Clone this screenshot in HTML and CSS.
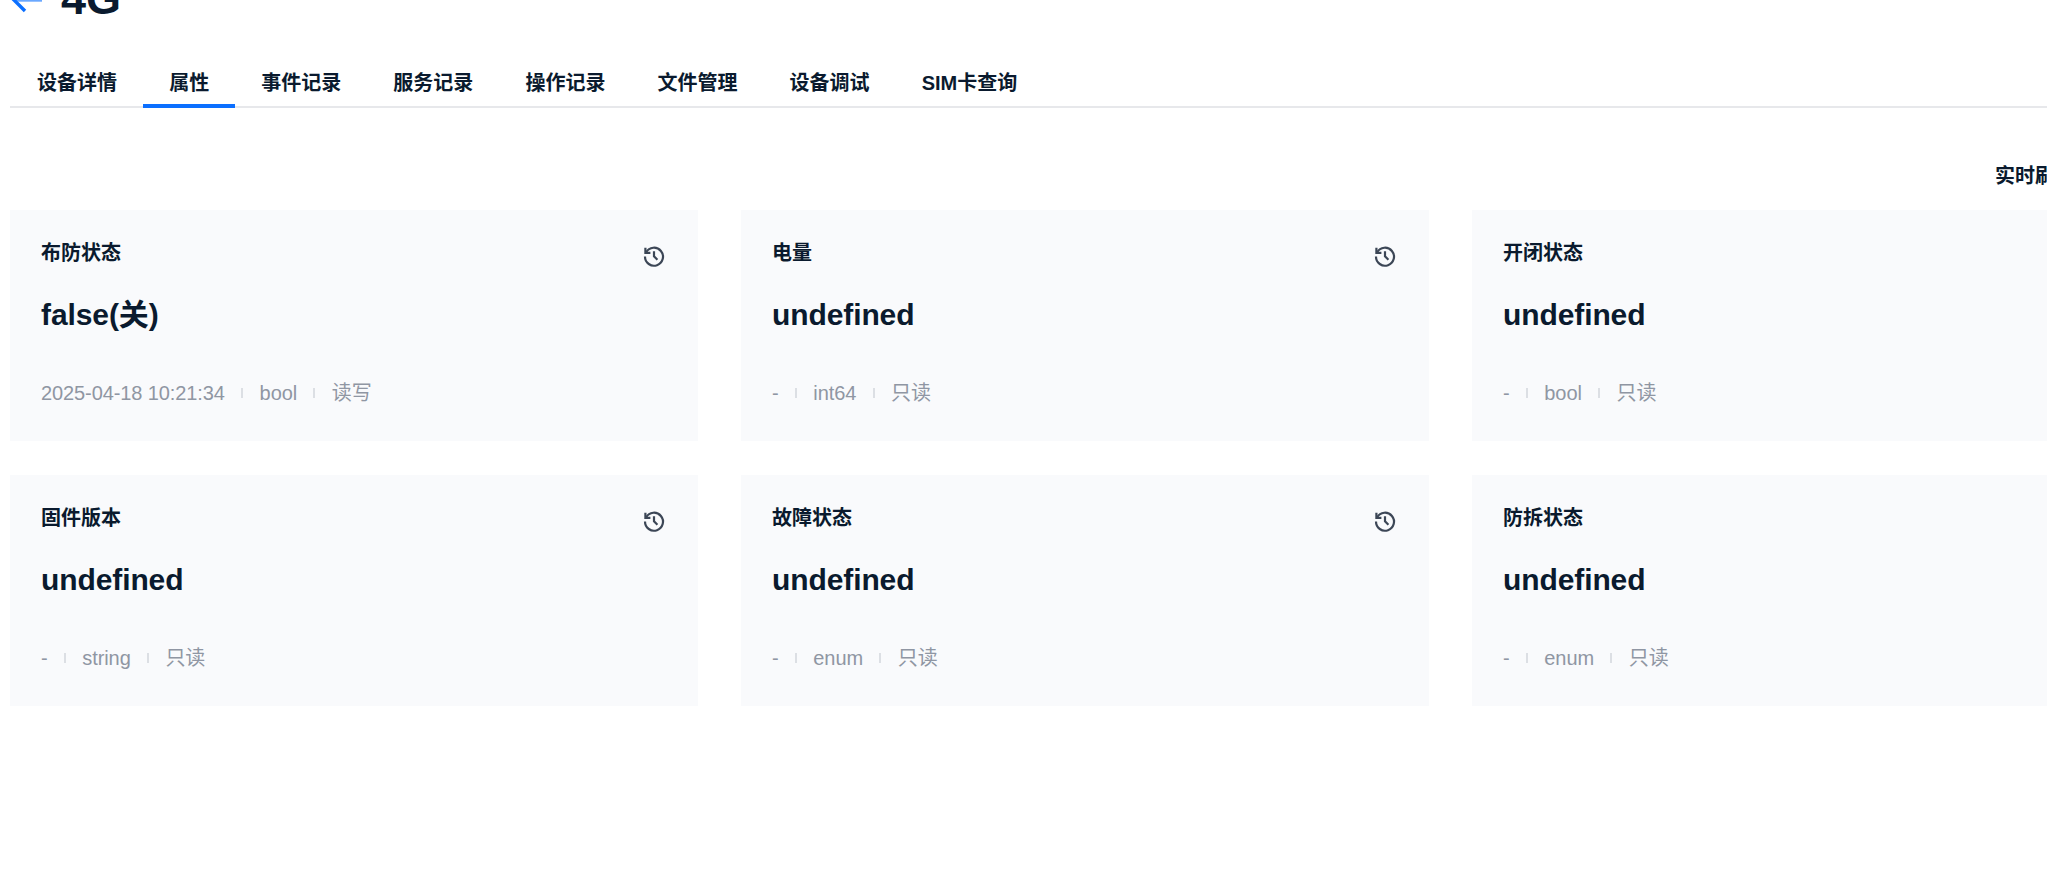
FILE: index.html
```html
<!DOCTYPE html>
<html lang="zh-CN">
<head>
    <meta charset="UTF-8">
    <meta name="viewport" content="width=device-width, initial-scale=1.0">
    <title>设备属性</title>
    <link rel="stylesheet" href="styles.css">
</head>
<body>
    <div class="page">
        <header class="device-head">
            <svg class="back-icon" viewBox="0 0 32 32" fill="none" stroke="#0b6fff" stroke-width="3.4">
                <path d="M32 16H5" stroke="#6aa8ff"></path>
                <path d="M15 5 4 16l11 11"></path>
            </svg>
            <h1>4G</h1>
        </header>

        <nav class="tabs">
            <a class="tab">设备详情</a>
            <a class="tab active">属性</a>
            <a class="tab">事件记录</a>
            <a class="tab">服务记录</a>
            <a class="tab">操作记录</a>
            <a class="tab">文件管理</a>
            <a class="tab">设备调试</a>
            <a class="tab">SIM卡查询</a>
        </nav>

        <div class="toolbar">
            <span class="refresh">实时刷新</span>
        </div>

        <div class="cards">
            <div class="card">
                <div class="card-head">
                    <span class="card-title">布防状态</span>
                    <svg class="history"><use href="#history-icon"></use></svg>
                </div>
                <div class="card-value">false(关)</div>
                <div class="card-meta"><span>2025-04-18 10:21:34</span><i></i><span>bool</span><i></i><span>读写</span></div>
            </div>
            <div class="card">
                <div class="card-head">
                    <span class="card-title">电量</span>
                    <svg class="history"><use href="#history-icon"></use></svg>
                </div>
                <div class="card-value">undefined</div>
                <div class="card-meta"><span>-</span><i></i><span>int64</span><i></i><span>只读</span></div>
            </div>
            <div class="card">
                <div class="card-head">
                    <span class="card-title">开闭状态</span>
                    <svg class="history"><use href="#history-icon"></use></svg>
                </div>
                <div class="card-value">undefined</div>
                <div class="card-meta"><span>-</span><i></i><span>bool</span><i></i><span>只读</span></div>
            </div>
            <div class="card">
                <div class="card-head">
                    <span class="card-title">固件版本</span>
                    <svg class="history"><use href="#history-icon"></use></svg>
                </div>
                <div class="card-value">undefined</div>
                <div class="card-meta"><span>-</span><i></i><span>string</span><i></i><span>只读</span></div>
            </div>
            <div class="card">
                <div class="card-head">
                    <span class="card-title">故障状态</span>
                    <svg class="history"><use href="#history-icon"></use></svg>
                </div>
                <div class="card-value">undefined</div>
                <div class="card-meta"><span>-</span><i></i><span>enum</span><i></i><span>只读</span></div>
            </div>
            <div class="card">
                <div class="card-head">
                    <span class="card-title">防拆状态</span>
                    <svg class="history"><use href="#history-icon"></use></svg>
                </div>
                <div class="card-value">undefined</div>
                <div class="card-meta"><span>-</span><i></i><span>enum</span><i></i><span>只读</span></div>
            </div>
        </div>
    </div>

    <svg class="icon-defs" width="0" height="0">
        <symbol id="history-icon" viewBox="0 0 24 24" fill="none" stroke="#3c4656" stroke-width="2.2">
            <path d="M4.2 8.2A9 9 0 1 1 3 12.6"></path>
            <path d="M3.4 3.8v5h5"></path>
            <path d="M12 7.2v5.2l3.4 3.4"></path>
        </symbol>
    </svg>
</body>
</html>
```

FILE: styles.css
```css
* {
    margin: 0;
    padding: 0;
    box-sizing: border-box;
}

html,
body {
    height: 100%;
    overflow: hidden;
    background: #fff;
}

body {
    font-family: "Liberation Sans", "Noto Sans CJK SC", sans-serif;
    color: #0a1a2e;
}

.page {
    width: 2160px;
    margin-left: 10px;
    margin-top: -22px;
}

.device-head {
    display: flex;
    align-items: center;
    gap: 19px;
    height: 44px;
}

.back-icon {
    width: 32px;
    height: 32px;
}

.device-head h1 {
    font-size: 45px;
    line-height: 42px;
    height: 44px;
    font-weight: 700;
}

.tabs {
    display: flex;
    margin-top: 36px;
    height: 50px;
    padding-left: 1px;
    border-bottom: 2px solid #e7e8eb;
}

.tab {
    height: 50px;
    padding: 0 26.05px;
    font-size: 20px;
    line-height: 50px;
    font-weight: 700;
}

.tab.active {
    border-bottom: 4px solid #0b6fff;
}

.toolbar {
    display: flex;
    justify-content: flex-end;
    height: 102px;
    padding-top: 54px;
}

.refresh {
    width: 175px;
    font-size: 20px;
    line-height: 28px;
    font-weight: 700;
}

.cards {
    display: grid;
    grid-template-columns: repeat(3, 688px);
    grid-auto-rows: 231px;
    column-gap: 43px;
    row-gap: 34px;
}

.card {
    padding: 28px 31px 0;
    background: #f9fafc;
}

.card-head {
    display: flex;
    justify-content: space-between;
    height: 55px;
}

.card-title {
    font-size: 20px;
    line-height: 30px;
    font-weight: 700;
}

.history {
    width: 24px;
    height: 24px;
    margin-top: 6px;
    margin-right: 1px;
}

.card-value {
    font-size: 30px;
    line-height: 44px;
    font-weight: 700;
    letter-spacing: -0.1px;
}

.card-meta {
    display: flex;
    align-items: center;
    margin-top: 41px;
    font-size: 20px;
    line-height: 30px;
    letter-spacing: -0.1px;
    color: #8f96a3;
}

.card-meta i {
    width: 2px;
    height: 10px;
    margin: 0 16.4px;
    background: #dcdfe4;
}

.icon-defs {
    position: absolute;
}
```
